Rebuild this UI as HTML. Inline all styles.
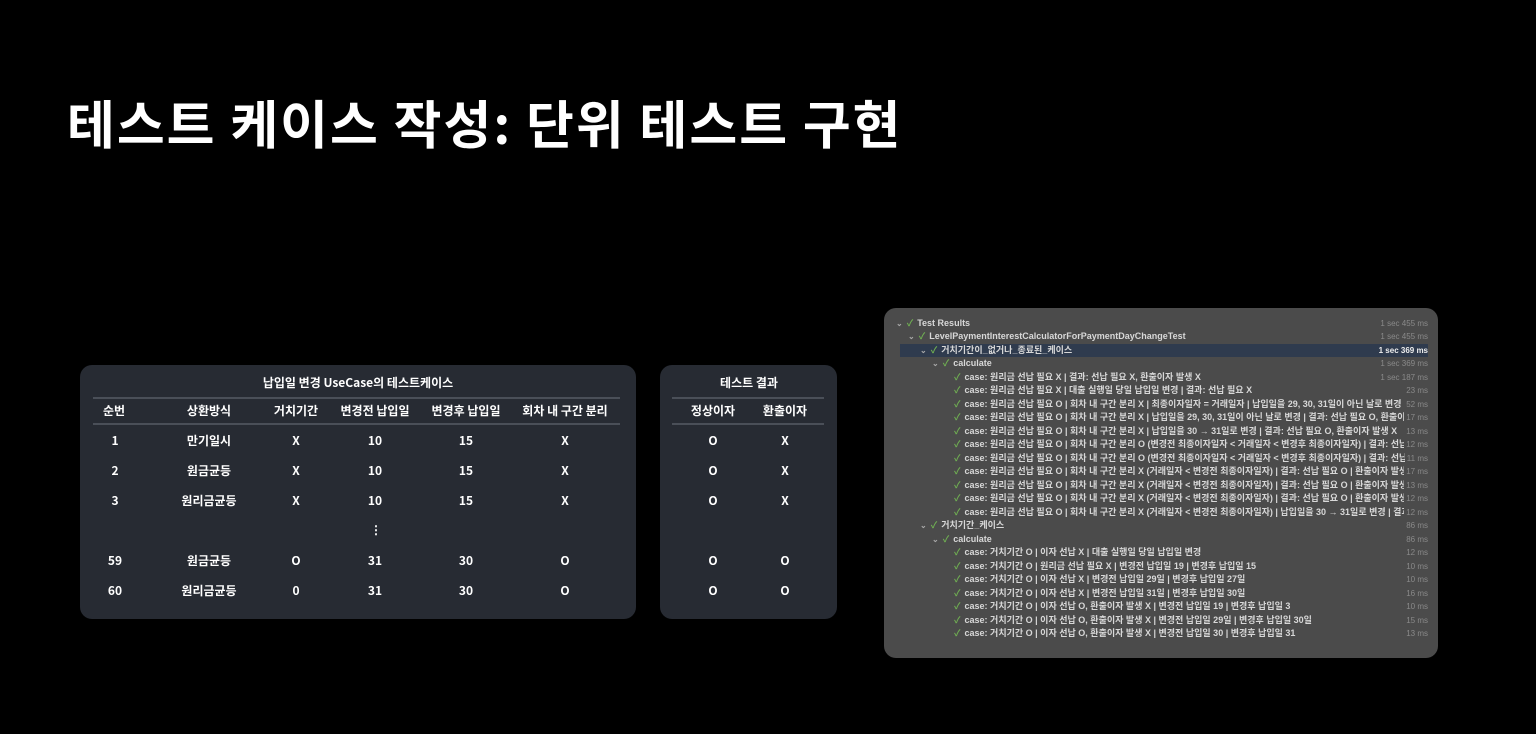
<!DOCTYPE html>
<html><head><meta charset="utf-8"><style>
*{margin:0;padding:0;box-sizing:border-box}
body{width:1536px;height:734px;background:#000;position:relative;overflow:hidden;font-family:"Liberation Sans","Noto Sans CJK KR",sans-serif;color:#fff}
h1{position:absolute;left:67px;top:84px;font-size:52px;font-weight:700;letter-spacing:2px;font-family:"Noto Sans CJK KR",sans-serif}
.p{position:absolute;background:#272b33;border-radius:12px}
.t{position:absolute;font-size:12px;font-weight:700;transform:translateX(-50%);white-space:nowrap;font-family:"Noto Sans CJK KR",sans-serif;line-height:14px}
.ln{position:absolute;height:2px;background:#4a4f58}
.tr{position:absolute;left:884px;top:308px;width:554px;height:350px;background:#4b4b4b;border-radius:12px;font-size:9px;font-weight:700;color:#d8d8d8;font-family:"Liberation Sans","Noto Sans CJK KR",sans-serif}
.r{position:absolute;left:0;right:10px;height:13px;line-height:13px;white-space:nowrap;overflow:hidden}
.r span.m{position:absolute;right:0;top:0;color:#8a8a8a;font-size:8px;font-weight:400;background:#4b4b4b;padding-left:2px}
.c{color:#6fae52;margin-right:4px}
.a{color:#aaa;margin-right:4px;font-size:8px}
.hl{background:#2f3b4e}
.hl span.m{background:#2f3b4e;color:#eee;font-weight:700}
</style></head><body>
<h1>테스트 케이스 작성: 단위 테스트 구현</h1>

<div class="p" style="left:80px;top:365px;width:556px;height:254px"></div>
<div class="ln" style="left:93px;top:397px;width:527px"></div>
<div class="ln" style="left:93px;top:423px;width:527px"></div>
<div class="t" style="left:358px;top:376px">납입일 변경 UseCase의 테스트케이스</div>
<div class="t" style="left:114px;top:404px">순번</div>
<div class="t" style="left:209px;top:404px">상환방식</div>
<div class="t" style="left:296px;top:404px">거치기간</div>
<div class="t" style="left:375px;top:404px">변경전 납입일</div>
<div class="t" style="left:466px;top:404px">변경후 납입일</div>
<div class="t" style="left:565px;top:404px">회차 내 구간 분리</div>

<div class="t" style="left:115px;top:434px">1</div><div class="t" style="left:209px;top:434px">만기일시</div><div class="t" style="left:296px;top:434px">X</div><div class="t" style="left:375px;top:434px">10</div><div class="t" style="left:466px;top:434px">15</div><div class="t" style="left:565px;top:434px">X</div>
<div class="t" style="left:115px;top:464px">2</div><div class="t" style="left:209px;top:464px">원금균등</div><div class="t" style="left:296px;top:464px">X</div><div class="t" style="left:375px;top:464px">10</div><div class="t" style="left:466px;top:464px">15</div><div class="t" style="left:565px;top:464px">X</div>
<div class="t" style="left:115px;top:494px">3</div><div class="t" style="left:209px;top:494px">원리금균등</div><div class="t" style="left:296px;top:494px">X</div><div class="t" style="left:375px;top:494px">10</div><div class="t" style="left:466px;top:494px">15</div><div class="t" style="left:565px;top:494px">X</div>
<div class="t" style="left:376px;top:523px">⋮</div>
<div class="t" style="left:115px;top:554px">59</div><div class="t" style="left:209px;top:554px">원금균등</div><div class="t" style="left:296px;top:554px">O</div><div class="t" style="left:375px;top:554px">31</div><div class="t" style="left:466px;top:554px">30</div><div class="t" style="left:565px;top:554px">O</div>
<div class="t" style="left:115px;top:584px">60</div><div class="t" style="left:209px;top:584px">원리금균등</div><div class="t" style="left:296px;top:584px">0</div><div class="t" style="left:375px;top:584px">31</div><div class="t" style="left:466px;top:584px">30</div><div class="t" style="left:565px;top:584px">O</div>

<div class="p" style="left:660px;top:365px;width:177px;height:254px"></div>
<div class="ln" style="left:672px;top:397px;width:152px"></div>
<div class="ln" style="left:672px;top:423px;width:152px"></div>
<div class="t" style="left:749px;top:376px">테스트 결과</div>
<div class="t" style="left:713px;top:404px">정상이자</div><div class="t" style="left:785px;top:404px">환출이자</div>
<div class="t" style="left:713px;top:434px">O</div><div class="t" style="left:785px;top:434px">X</div>
<div class="t" style="left:713px;top:464px">O</div><div class="t" style="left:785px;top:464px">X</div>
<div class="t" style="left:713px;top:494px">O</div><div class="t" style="left:785px;top:494px">X</div>
<div class="t" style="left:713px;top:554px">O</div><div class="t" style="left:785px;top:554px">O</div>
<div class="t" style="left:713px;top:584px">O</div><div class="t" style="left:785px;top:584px">O</div>

<div class="tr">
<div class="r" style="top:9px;padding-left:12px"><span class="a">⌄</span><span class="c">✓</span>Test Results<span class="m">1 sec 455 ms</span></div>
<div class="r" style="top:22px;padding-left:24px"><span class="a">⌄</span><span class="c">✓</span>LevelPaymentInterestCalculatorForPaymentDayChangeTest<span class="m">1 sec 455 ms</span></div>
<div class="r hl" style="top:36px;left:16px;padding-left:20px;right:10px"><span class="a">⌄</span><span class="c">✓</span>거치기간이_없거나_종료된_케이스<span class="m">1 sec 369 ms</span></div>
<div class="r" style="top:49px;padding-left:48px"><span class="a">⌄</span><span class="c">✓</span>calculate<span class="m">1 sec 369 ms</span></div>
<div class="r" style="top:63px;padding-left:70px"><span class="c">✓</span>case: 원리금 선납 필요 X | 결과: 선납 필요 X, 환출이자 발생 X<span class="m">1 sec 187 ms</span></div>
<div class="r" style="top:76px;padding-left:70px"><span class="c">✓</span>case: 원리금 선납 필요 X | 대출 실행일 당일 납입일 변경 | 결과: 선납 필요 X<span class="m">23 ms</span></div>
<div class="r" style="top:90px;padding-left:70px"><span class="c">✓</span>case: 원리금 선납 필요 O | 회차 내 구간 분리 X | 최종이자일자 = 거래일자 | 납입일을 29, 30, 31일이 아닌 날로 변경 | 결과: 선납<span class="m">52 ms</span></div>
<div class="r" style="top:103px;padding-left:70px"><span class="c">✓</span>case: 원리금 선납 필요 O | 회차 내 구간 분리 X | 납입일을 29, 30, 31일이 아닌 날로 변경 | 결과: 선납 필요 O, 환출이자 발생<span class="m">17 ms</span></div>
<div class="r" style="top:117px;padding-left:70px"><span class="c">✓</span>case: 원리금 선납 필요 O | 회차 내 구간 분리 X | 납입일을 30 → 31일로 변경 | 결과: 선납 필요 O, 환출이자 발생 X<span class="m">13 ms</span></div>
<div class="r" style="top:130px;padding-left:70px"><span class="c">✓</span>case: 원리금 선납 필요 O | 회차 내 구간 분리 O (변경전 최종이자일자 &lt; 거래일자 &lt; 변경후 최종이자일자) | 결과: 선납 필요 O<span class="m">12 ms</span></div>
<div class="r" style="top:144px;padding-left:70px"><span class="c">✓</span>case: 원리금 선납 필요 O | 회차 내 구간 분리 O (변경전 최종이자일자 &lt; 거래일자 &lt; 변경후 최종이자일자) | 결과: 선납 필요 O<span class="m">11 ms</span></div>
<div class="r" style="top:157px;padding-left:70px"><span class="c">✓</span>case: 원리금 선납 필요 O | 회차 내 구간 분리 X (거래일자 &lt; 변경전 최종이자일자) | 결과: 선납 필요 O | 환출이자 발생 O<span class="m">17 ms</span></div>
<div class="r" style="top:171px;padding-left:70px"><span class="c">✓</span>case: 원리금 선납 필요 O | 회차 내 구간 분리 X (거래일자 &lt; 변경전 최종이자일자) | 결과: 선납 필요 O | 환출이자 발생 O<span class="m">13 ms</span></div>
<div class="r" style="top:184px;padding-left:70px"><span class="c">✓</span>case: 원리금 선납 필요 O | 회차 내 구간 분리 X (거래일자 &lt; 변경전 최종이자일자) | 결과: 선납 필요 O | 환출이자 발생 O<span class="m">12 ms</span></div>
<div class="r" style="top:198px;padding-left:70px"><span class="c">✓</span>case: 원리금 선납 필요 O | 회차 내 구간 분리 X (거래일자 &lt; 변경전 최종이자일자) | 납입일을 30 → 31일로 변경 | 결과: 선납<span class="m">12 ms</span></div>
<div class="r" style="top:211px;padding-left:36px"><span class="a">⌄</span><span class="c">✓</span>거치기간_케이스<span class="m">86 ms</span></div>
<div class="r" style="top:225px;padding-left:48px"><span class="a">⌄</span><span class="c">✓</span>calculate<span class="m">86 ms</span></div>
<div class="r" style="top:238px;padding-left:70px"><span class="c">✓</span>case: 거치기간 O | 이자 선납 X | 대출 실행일 당일 납입일 변경<span class="m">12 ms</span></div>
<div class="r" style="top:252px;padding-left:70px"><span class="c">✓</span>case: 거치기간 O | 원리금 선납 필요 X | 변경전 납입일 19 | 변경후 납입일 15<span class="m">10 ms</span></div>
<div class="r" style="top:265px;padding-left:70px"><span class="c">✓</span>case: 거치기간 O | 이자 선납 X | 변경전 납입일 29일 | 변경후 납입일 27일<span class="m">10 ms</span></div>
<div class="r" style="top:279px;padding-left:70px"><span class="c">✓</span>case: 거치기간 O | 이자 선납 X | 변경전 납입일 31일 | 변경후 납입일 30일<span class="m">16 ms</span></div>
<div class="r" style="top:292px;padding-left:70px"><span class="c">✓</span>case: 거치기간 O | 이자 선납 O, 환출이자 발생 X | 변경전 납입일 19 | 변경후 납입일 3<span class="m">10 ms</span></div>
<div class="r" style="top:306px;padding-left:70px"><span class="c">✓</span>case: 거치기간 O | 이자 선납 O, 환출이자 발생 X | 변경전 납입일 29일 | 변경후 납입일 30일<span class="m">15 ms</span></div>
<div class="r" style="top:319px;padding-left:70px"><span class="c">✓</span>case: 거치기간 O | 이자 선납 O, 환출이자 발생 X | 변경전 납입일 30 | 변경후 납입일 31<span class="m">13 ms</span></div>
</div>
</body></html>
